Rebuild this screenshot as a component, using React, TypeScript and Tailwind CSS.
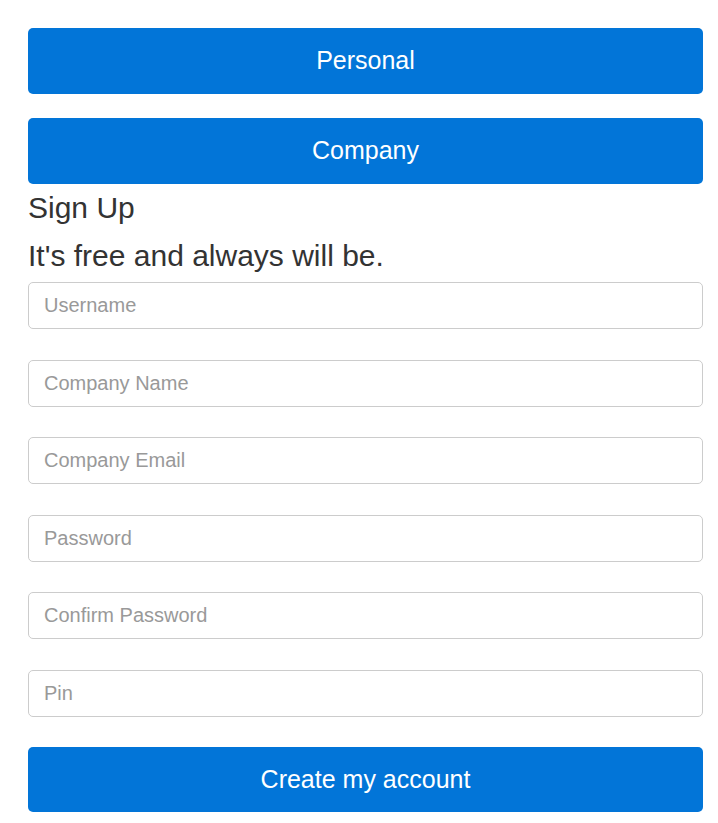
import React from "react";

const fields = ["Username", "Company Name", "Company Email", "Password", "Confirm Password", "Pin"];

export default function App() {
  return (
    <div className="min-h-screen bg-white px-[28px] pt-[28px] text-[#333]" style={{ fontFamily: '"Liberation Sans", Arial, sans-serif' }}>
      <div className="w-[675px]">
        <button className="flex h-[66px] w-full items-center justify-center rounded-[5px] bg-[#0275d8] text-[25px] text-white">
          Personal
        </button>
        <button className="mt-[24px] flex h-[66px] w-full items-center justify-center rounded-[5px] bg-[#0275d8] text-[25px] text-white">
          Company
        </button>
        <div className="h-[46px] text-[30px] leading-[47px]">Sign Up</div>
        <div className="h-[50px] text-[30px] leading-[52px]">It's free and always will be.</div>
        <form className="mt-[2px]" onSubmit={(e) => e.preventDefault()}>
          {fields.map((f) => (
            <input
              key={f}
              type={f.includes("Password") || f === "Pin" ? "password" : "text"}
              placeholder={f}
              className="mb-[30.5px] block h-[47px] w-full rounded-[5px] border border-[#ccc] px-[15px] text-[20px] text-[#333] outline-none placeholder:text-[#999]"
            />
          ))}
          <button className="flex h-[65px] w-full items-center justify-center rounded-[5px] bg-[#0275d8] text-[25px] text-white">
            Create my account
          </button>
        </form>
      </div>
    </div>
  );
}
